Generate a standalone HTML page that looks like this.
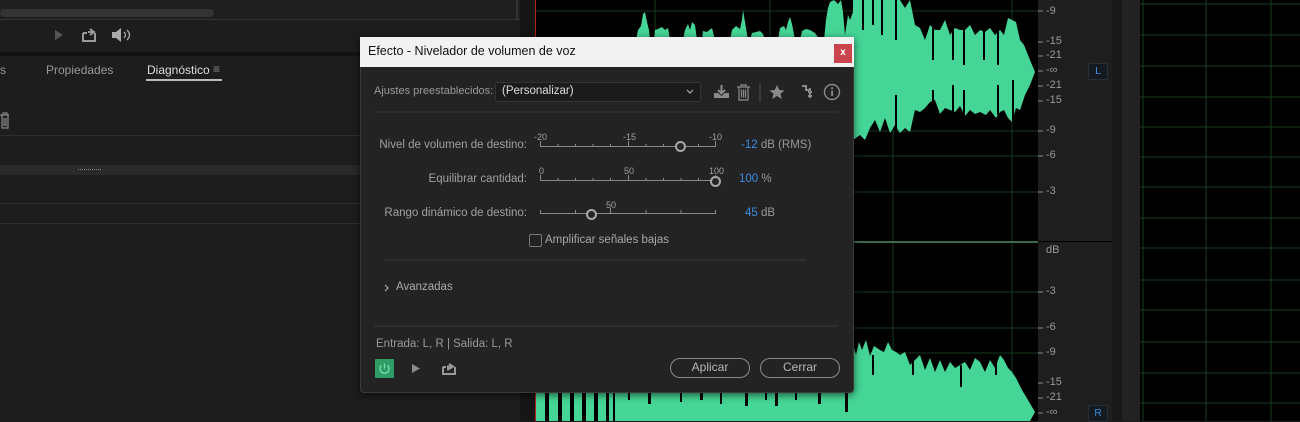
<!DOCTYPE html>
<html><head><meta charset="utf-8"><style>
*{margin:0;padding:0;box-sizing:border-box}
body{width:1300px;height:421px;overflow:hidden;background:#1d1d1d;font-family:"Liberation Sans",sans-serif;position:relative}
.a{position:absolute}
.t{position:absolute;white-space:nowrap;font-size:12px;color:#9a9a9a}
.lbl{position:absolute;white-space:nowrap;font-size:11.5px;color:#a0a0a0;text-align:right;width:200px}
.tick{position:absolute;font-size:9px;color:#a0a0a0}
.blue{color:#3b8ee0}
.knob{position:absolute;width:11px;height:11px;border:2px solid #a8a8a8;border-radius:50%;background:#262626}
.btn{position:absolute;height:20px;border:1.5px solid #8a8a8a;border-radius:10px;color:#b8b8b8;font-size:12px;text-align:center;line-height:17px}
.rl{position:absolute;font-size:11px;color:#999;left:1046px}
</style></head><body>

<div class="a" style="left:0;top:0;width:520px;height:20px;background:#1f1f1f;border-bottom:1px solid #333"></div>
<div class="a" style="left:0;top:9px;width:214px;height:8px;background:#333;border-radius:4px"></div>
<div class="a" style="left:516px;top:0;width:2px;height:20px;background:#333"></div>
<svg class="a" style="left:50px;top:26px" width="90" height="20">
<polygon points="5,4 5,14 13,9" fill="#555"/>
<path d="M33 7 h4 M33 7 v8 h12 v-8 M40 3 l4 3 l-4 3 M44 6 h-6" stroke="#999" stroke-width="2" fill="none"/>
<polygon points="62,6 66,6 71,2 71,16 66,12 62,12" fill="#aaa"/>
<path d="M74 6 q3 3 0 6 M77 4 q5 5 0 10" stroke="#aaa" stroke-width="1.3" fill="none"/>
</svg>
<div class="a" style="left:0;top:52px;width:530px;height:4px;background:#121212"></div>
<div class="t" style="left:0;top:63px;color:#999">s</div>
<div class="t" style="left:46px;top:63px;color:#999">Propiedades</div>
<div class="t" style="left:147px;top:63px;color:#ddd">Diagnóstico</div>
<div class="t" style="left:213px;top:62px;color:#888">≡</div>
<div class="a" style="left:146px;top:79px;width:76px;height:2px;background:#bbb"></div>
<svg class="a" style="left:0;top:112px" width="12" height="18"><path d="M0 3 h9 M2 3 v13 h6 v-13 M4 6 v8 M6 6 v8 M3 3 v-2 h4 v2" stroke="#888" stroke-width="1.2" fill="none"/></svg>
<div class="a" style="left:0;top:135px;width:535px;height:1px;background:#2e2e2e"></div>
<div class="a" style="left:0;top:165px;width:535px;height:10px;background:#2a2a2a"></div>
<div class="a" style="left:78px;top:169px;width:23px;height:2px;border-top:1px dotted #888"></div>
<div class="a" style="left:0;top:203px;width:535px;height:1px;background:#2e2e2e"></div>
<div class="a" style="left:0;top:223px;width:535px;height:1px;background:#2e2e2e"></div>
<div class="a" style="left:520px;top:0;width:16px;height:421px;background:#151515"></div>

<div class="a" style="left:536px;top:0;width:502px;height:421px;background:#000"></div>
<div class="a" style="left:535px;top:0;width:1px;height:421px;background:#b02020"></div>
<svg class="a" style="left:0;top:0" width="1300" height="421">
<g stroke="#143a1c" stroke-width="1">
<line x1="893" y1="0" x2="893" y2="421"/><line x1="1012" y1="0" x2="1012" y2="421"/><line x1="770" y1="0" x2="770" y2="421"/><line x1="655" y1="0" x2="655" y2="421"/>
<line x1="536" y1="11" x2="1038" y2="11"/>
<line x1="536" y1="131" x2="1038" y2="131"/><line x1="536" y1="156" x2="1038" y2="156"/><line x1="536" y1="192" x2="1038" y2="192"/>
<line x1="536" y1="292" x2="1038" y2="292"/><line x1="536" y1="328" x2="1038" y2="328"/><line x1="536" y1="353" x2="1038" y2="353"/>
</g>
<line x1="536" y1="242" x2="1038" y2="242" stroke="#3a6a48" stroke-width="2"/>
<g fill="#45d596">
<polygon points="636,40 638,30 641,26 643,14 645,12 647,22 649,30 650,40"/>
<polygon points="654,40 655,30 658,29 662,27 665,30 668,28 670,40"/>
<polygon points="683,40 685,30 688,24 690,30 692,22 695,25 697,40"/>
<polygon points="702,40 703,31 707,32 712,28 715,40"/>
<polygon points="730,40 732,30 736,26 740,29 742,20 743,10 745,22 748,40"/>
<polygon points="750,40 752,33 756,32 760,31 763,34 765,40"/>
<polygon points="778,40 780,28 784,26 786,30 788,22 790,17 792,24 795,40"/>
<polygon points="800,40 802,31 806,29 810,30 815,33 820,40"/>
<polygon points="824,40 826,20 828,8 830,2 834,0 838,4 841,0 843,12 845,35 848,15 850,20 853,12 853,40"/>
<polygon points="853,0 900,0 905,8 910,0 915,25 920,28 925,40 930,25 935,30 940,30 945,20 950,35 955,28 960,30 965,30 970,25 975,35 980,30 985,32 990,28 995,35 1000,30 1004,35 1008,18 1012,20 1016,22 1020,40 1024,45 1030,60 1035,72 1030,85 1025,95 1020,110 1016,108 1012,122 1008,118 1004,110 1000,112 996,118 990,110 986,115 980,112 975,114 970,110 965,116 960,106 955,112 950,110 945,108 940,114 935,100 930,102 925,108 920,112 915,110 910,132 905,128 900,133 895,125 890,133 885,118 880,132 875,120 870,128 865,140 860,135 853,140"/>
<polygon points="853,345 856,355 859,342 862,350 866,340 870,356 874,346 880,350 884,352 888,342 892,350 896,352 900,355 905,352 910,365 915,360 920,355 925,370 930,358 935,372 940,360 945,372 950,362 955,368 960,365 965,362 970,370 975,358 980,362 985,372 990,360 995,368 1000,355 1004,360 1008,368 1012,372 1016,378 1022,390 1028,400 1035,412 1030,421 853,421"/>
<rect x="536" y="390" width="317" height="31"/>
</g>
<g fill="#000">
<rect x="545" y="392" width="4" height="29"/><rect x="558" y="392" width="4" height="29"/><rect x="570" y="392" width="4" height="29"/><rect x="582" y="392" width="4" height="29"/><rect x="594" y="392" width="4" height="29"/><rect x="606" y="392" width="3" height="29"/><rect x="613" y="392" width="2" height="29"/>
<rect x="628" y="392" width="2" height="8"/><rect x="648" y="392" width="3" height="12"/><rect x="680" y="392" width="2" height="10"/><rect x="700" y="392" width="3" height="8"/><rect x="720" y="392" width="2" height="12"/><rect x="745" y="392" width="3" height="14"/><rect x="765" y="392" width="2" height="8"/><rect x="775" y="392" width="3" height="14"/><rect x="795" y="392" width="2" height="8"/><rect x="818" y="392" width="3" height="12"/><rect x="845" y="392" width="3" height="20"/>
<rect x="872" y="355" width="2" height="20"/><rect x="912" y="360" width="2" height="15"/><rect x="960" y="365" width="2" height="22"/><rect x="995" y="360" width="2" height="15"/>
<rect x="862" y="0" width="2" height="30"/><rect x="872" y="0" width="2" height="25"/><rect x="881" y="0" width="2" height="35"/><rect x="895" y="0" width="2" height="40"/><rect x="932" y="20" width="2" height="40"/><rect x="952" y="25" width="2" height="35"/><rect x="963" y="25" width="2" height="40"/><rect x="983" y="25" width="2" height="35"/><rect x="997" y="25" width="2" height="40"/>
<rect x="895" y="95" width="2" height="45"/><rect x="932" y="90" width="2" height="30"/><rect x="952" y="85" width="2" height="30"/><rect x="963" y="90" width="2" height="30"/><rect x="997" y="85" width="2" height="30"/><rect x="1012" y="80" width="2" height="45"/>
</g>
</svg>

<div class="a" style="left:1038px;top:0;width:74px;height:421px;background:#1e1e1e"></div>
<div class="a" style="left:1038px;top:241px;width:74px;height:1px;background:#000"></div>
<svg class="a" style="left:1038px;top:0" width="8" height="421">
<g stroke="#888"><line x1="0" y1="11" x2="5" y2="11"/><line x1="0" y1="42" x2="5" y2="42"/><line x1="0" y1="56" x2="5" y2="56"/><line x1="0" y1="71" x2="5" y2="71"/><line x1="0" y1="86" x2="5" y2="86"/><line x1="0" y1="101" x2="5" y2="101"/><line x1="0" y1="131" x2="5" y2="131"/><line x1="0" y1="156" x2="5" y2="156"/><line x1="0" y1="192" x2="5" y2="192"/><line x1="0" y1="292" x2="5" y2="292"/><line x1="0" y1="328" x2="5" y2="328"/><line x1="0" y1="353" x2="5" y2="353"/><line x1="0" y1="383" x2="5" y2="383"/><line x1="0" y1="398" x2="5" y2="398"/><line x1="0" y1="413" x2="5" y2="413"/></g>
</svg>
<div class="rl" style="top:5px">-9</div><div class="rl" style="top:35px">-15</div><div class="rl" style="top:49px">-21</div><div class="rl" style="top:64px">-∞</div><div class="rl" style="top:79px">-21</div><div class="rl" style="top:94px">-15</div><div class="rl" style="top:124px">-9</div><div class="rl" style="top:149px">-6</div><div class="rl" style="top:185px">-3</div><div class="rl" style="top:244px">dB</div><div class="rl" style="top:285px">-3</div><div class="rl" style="top:321px">-6</div><div class="rl" style="top:346px">-9</div><div class="rl" style="top:376px">-15</div><div class="rl" style="top:391px">-21</div><div class="rl" style="top:406px">-∞</div>
<div class="a" style="left:1088px;top:63px;width:20px;height:17px;background:#151a20;border:1px solid #2a2f36;border-radius:2px;color:#3b8ee0;font-size:10px;text-align:center;line-height:15px">L</div>
<div class="a" style="left:1088px;top:405px;width:20px;height:17px;background:#151a20;border:1px solid #2a2f36;border-radius:2px;color:#3b8ee0;font-size:10px;text-align:center;line-height:15px">R</div>
<div class="a" style="left:1112px;top:0;width:10px;height:421px;background:#181818"></div>
<div class="a" style="left:1122px;top:0;width:18px;height:421px;background:#222"></div>
<svg class="a" style="left:1140px;top:0;background:#000" width="160" height="421">
<g stroke="#173d20"><line x1="3" y1="0" x2="3" y2="421"/><line x1="66" y1="0" x2="66" y2="421"/><line x1="131" y1="0" x2="131" y2="421"/>
<line x1="0" y1="4" x2="160" y2="4"/><line x1="0" y1="35" x2="160" y2="35"/><line x1="0" y1="66" x2="160" y2="66"/><line x1="0" y1="97" x2="160" y2="97"/><line x1="0" y1="127" x2="160" y2="127"/><line x1="0" y1="157" x2="160" y2="157"/><line x1="0" y1="187" x2="160" y2="187"/><line x1="0" y1="218" x2="160" y2="218"/><line x1="0" y1="248" x2="160" y2="248"/><line x1="0" y1="280" x2="160" y2="280"/><line x1="0" y1="310" x2="160" y2="310"/><line x1="0" y1="342" x2="160" y2="342"/><line x1="0" y1="373" x2="160" y2="373"/><line x1="0" y1="403" x2="160" y2="403"/></g></svg>

<div class="a" style="left:360px;top:37px;width:494px;height:356px;background:#232323;border:1px solid #3a3a3a;border-radius:0 0 4px 4px;box-shadow:0 2px 8px rgba(0,0,0,.6)"></div>
<div class="a" style="left:360px;top:37px;width:494px;height:30px;background:#f2f2f2"></div>
<div class="t" style="left:368px;top:44px;font-size:12.5px;color:#111">Efecto - Nivelador de volumen de voz</div>
<div class="a" style="left:834px;top:44px;width:18px;height:19px;background:#c9444d;color:#fff;font-size:10px;text-align:center;line-height:18px;font-weight:bold">x</div>

<div class="t" style="left:374px;top:85px;font-size:11px;color:#999">Ajustes preestablecidos:</div>
<div class="a" style="left:495px;top:82px;width:206px;height:20px;background:#1b1b1b;border:1px solid #333;border-radius:2px"></div>
<div class="t" style="left:502px;top:85px;font-size:11.5px;color:#ddd">(Personalizar)</div>
<svg class="a" style="left:686px;top:88px" width="10" height="8"><path d="M1 2 l3 3 l3 -3" stroke="#aaa" stroke-width="1.2" fill="none"/></svg>
<svg class="a" style="left:710px;top:80px" width="140" height="24">
<path d="M4 13 v5 h15 v-5 h-4 l-3.5 3 l-3.5 -3 z" fill="#8a8a8a"/><path d="M11.5 5 v9 M8 10 l3.5 3.5 l3.5 -3.5" stroke="#8a8a8a" stroke-width="2" fill="none"/>
<path d="M27 7 h13 M29 7 v13 h9 v-13 M31.5 9.5 v8 M33.5 9.5 v8 M35.5 9.5 v8 M31 7 v-2 h5 v2" stroke="#8a8a8a" stroke-width="1.2" fill="none"/>
<line x1="50" y1="3" x2="50" y2="22" stroke="#3a3a3a" stroke-width="2"/>
<polygon points="67,5 69.3,10 74.5,10.4 70.5,13.7 71.8,19 67,16 62.2,19 63.5,13.7 59.5,10.4 64.7,10" fill="#8a8a8a"/>
<path d="M92 6 h4 v4 h4 M100 8 v10 M98 12 h4 M98 16 h4" stroke="#8a8a8a" stroke-width="2" fill="none"/>
<circle cx="122" cy="12" r="7.5" stroke="#8a8a8a" stroke-width="1.4" fill="none"/><rect x="121.2" y="10.5" width="1.8" height="5.5" fill="#8a8a8a"/><rect x="121.2" y="7.3" width="1.8" height="1.8" fill="#8a8a8a"/>
</svg>
<div class="a" style="left:374px;top:111px;width:464px;height:2px;background:#2e2e2e"></div>

<svg class="a" style="left:536px;top:130px" width="190" height="95">
<g stroke="#8a8a8a" stroke-width="1">
<line x1="4" y1="16.5" x2="180" y2="16.5"/><line x1="4" y1="50.5" x2="180" y2="50.5"/><line x1="4" y1="83.5" x2="180" y2="83.5"/>
<path d="M4.5 11 v5 M22 14 v2 M39.5 14 v2 M57 14 v2 M74.5 14 v2 M92.5 11 v5 M110 14 v2 M127.5 14 v2 M145 14 v2 M162.5 14 v2 M179.5 11 v5"/>
<path d="M4.5 45 v5 M22 48 v2 M39.5 48 v2 M57 48 v2 M74.5 48 v2 M92.5 45 v5 M110 48 v2 M127.5 48 v2 M145 48 v2 M162.5 48 v2 M179.5 45 v5"/>
<path d="M4.5 80 v3 M39.5 80 v3 M74.5 78 v5 M110 80 v3 M145 80 v3 M179.5 80 v3"/>
</g></svg>
<div class="lbl" style="left:327px;top:139px">Nivel de volumen de destino:</div>
<div class="tick" style="left:534px;top:132px">-20</div><div class="tick" style="left:623px;top:132px">-15</div><div class="tick" style="left:709px;top:132px">-10</div>
<div class="knob" style="left:675px;top:141px"></div>
<div class="t" style="left:741px;top:139px;font-size:11.5px"><span class="blue">-12</span> dB (RMS)</div>

<div class="lbl" style="left:327px;top:173px">Equilibrar cantidad:</div>
<div class="tick" style="left:539px;top:166px">0</div><div class="tick" style="left:624px;top:166px">50</div><div class="tick" style="left:709px;top:166px">100</div>
<div class="knob" style="left:710px;top:176px"></div>
<div class="t" style="left:739px;top:173px;font-size:11.5px"><span class="blue">100</span> %</div>

<div class="lbl" style="left:327px;top:207px">Rango dinámico de destino:</div>
<div class="tick" style="left:606px;top:200px">50</div>
<div class="knob" style="left:586px;top:209px"></div>
<div class="t" style="left:745px;top:207px;font-size:11.5px"><span class="blue">45</span> dB</div>

<div class="a" style="left:529px;top:234px;width:13px;height:13px;border:1.5px solid #777;border-radius:2px"></div>
<div class="t" style="left:545px;top:234px;font-size:11.5px;color:#a8a8a8">Amplificar señales bajas</div>
<div class="a" style="left:384px;top:259px;width:422px;height:2px;background:#2e2e2e"></div>

<svg class="a" style="left:383px;top:283px" width="8" height="10"><path d="M2 2 l3 3 l-3 3" stroke="#aaa" stroke-width="1.2" fill="none"/></svg>
<div class="t" style="left:396px;top:281px;font-size:11.5px;color:#aaa">Avanzadas</div>
<div class="a" style="left:374px;top:325px;width:464px;height:2px;background:#2e2e2e"></div>
<div class="t" style="left:376px;top:338px;font-size:11.5px;color:#999">Entrada: L, R | Salida: L, R</div>

<div class="a" style="left:375px;top:359px;width:19px;height:19px;background:#2f9e66;border-radius:1px"></div>
<svg class="a" style="left:375px;top:359px" width="90" height="20">
<path d="M6.5 6.5 a4.5 4.5 0 1 0 6 0" stroke="#7ee0ae" stroke-width="1.2" fill="none"/><line x1="9.5" y1="4.5" x2="9.5" y2="9.5" stroke="#7ee0ae" stroke-width="1.2"/>
<polygon points="37,5 37,14 45,9.5" fill="#8a8a8a"/>
<path d="M68 8 h3 M68 8 v7 h12 v-7 M74 5 l4 2.5 l-4 2.5 M78 7.5 h-5 v4" stroke="#999" stroke-width="2" fill="none"/>
</svg>
<div class="btn" style="left:670px;top:358px;width:80px">Aplicar</div>
<div class="btn" style="left:760px;top:358px;width:80px">Cerrar</div>
</body></html>
